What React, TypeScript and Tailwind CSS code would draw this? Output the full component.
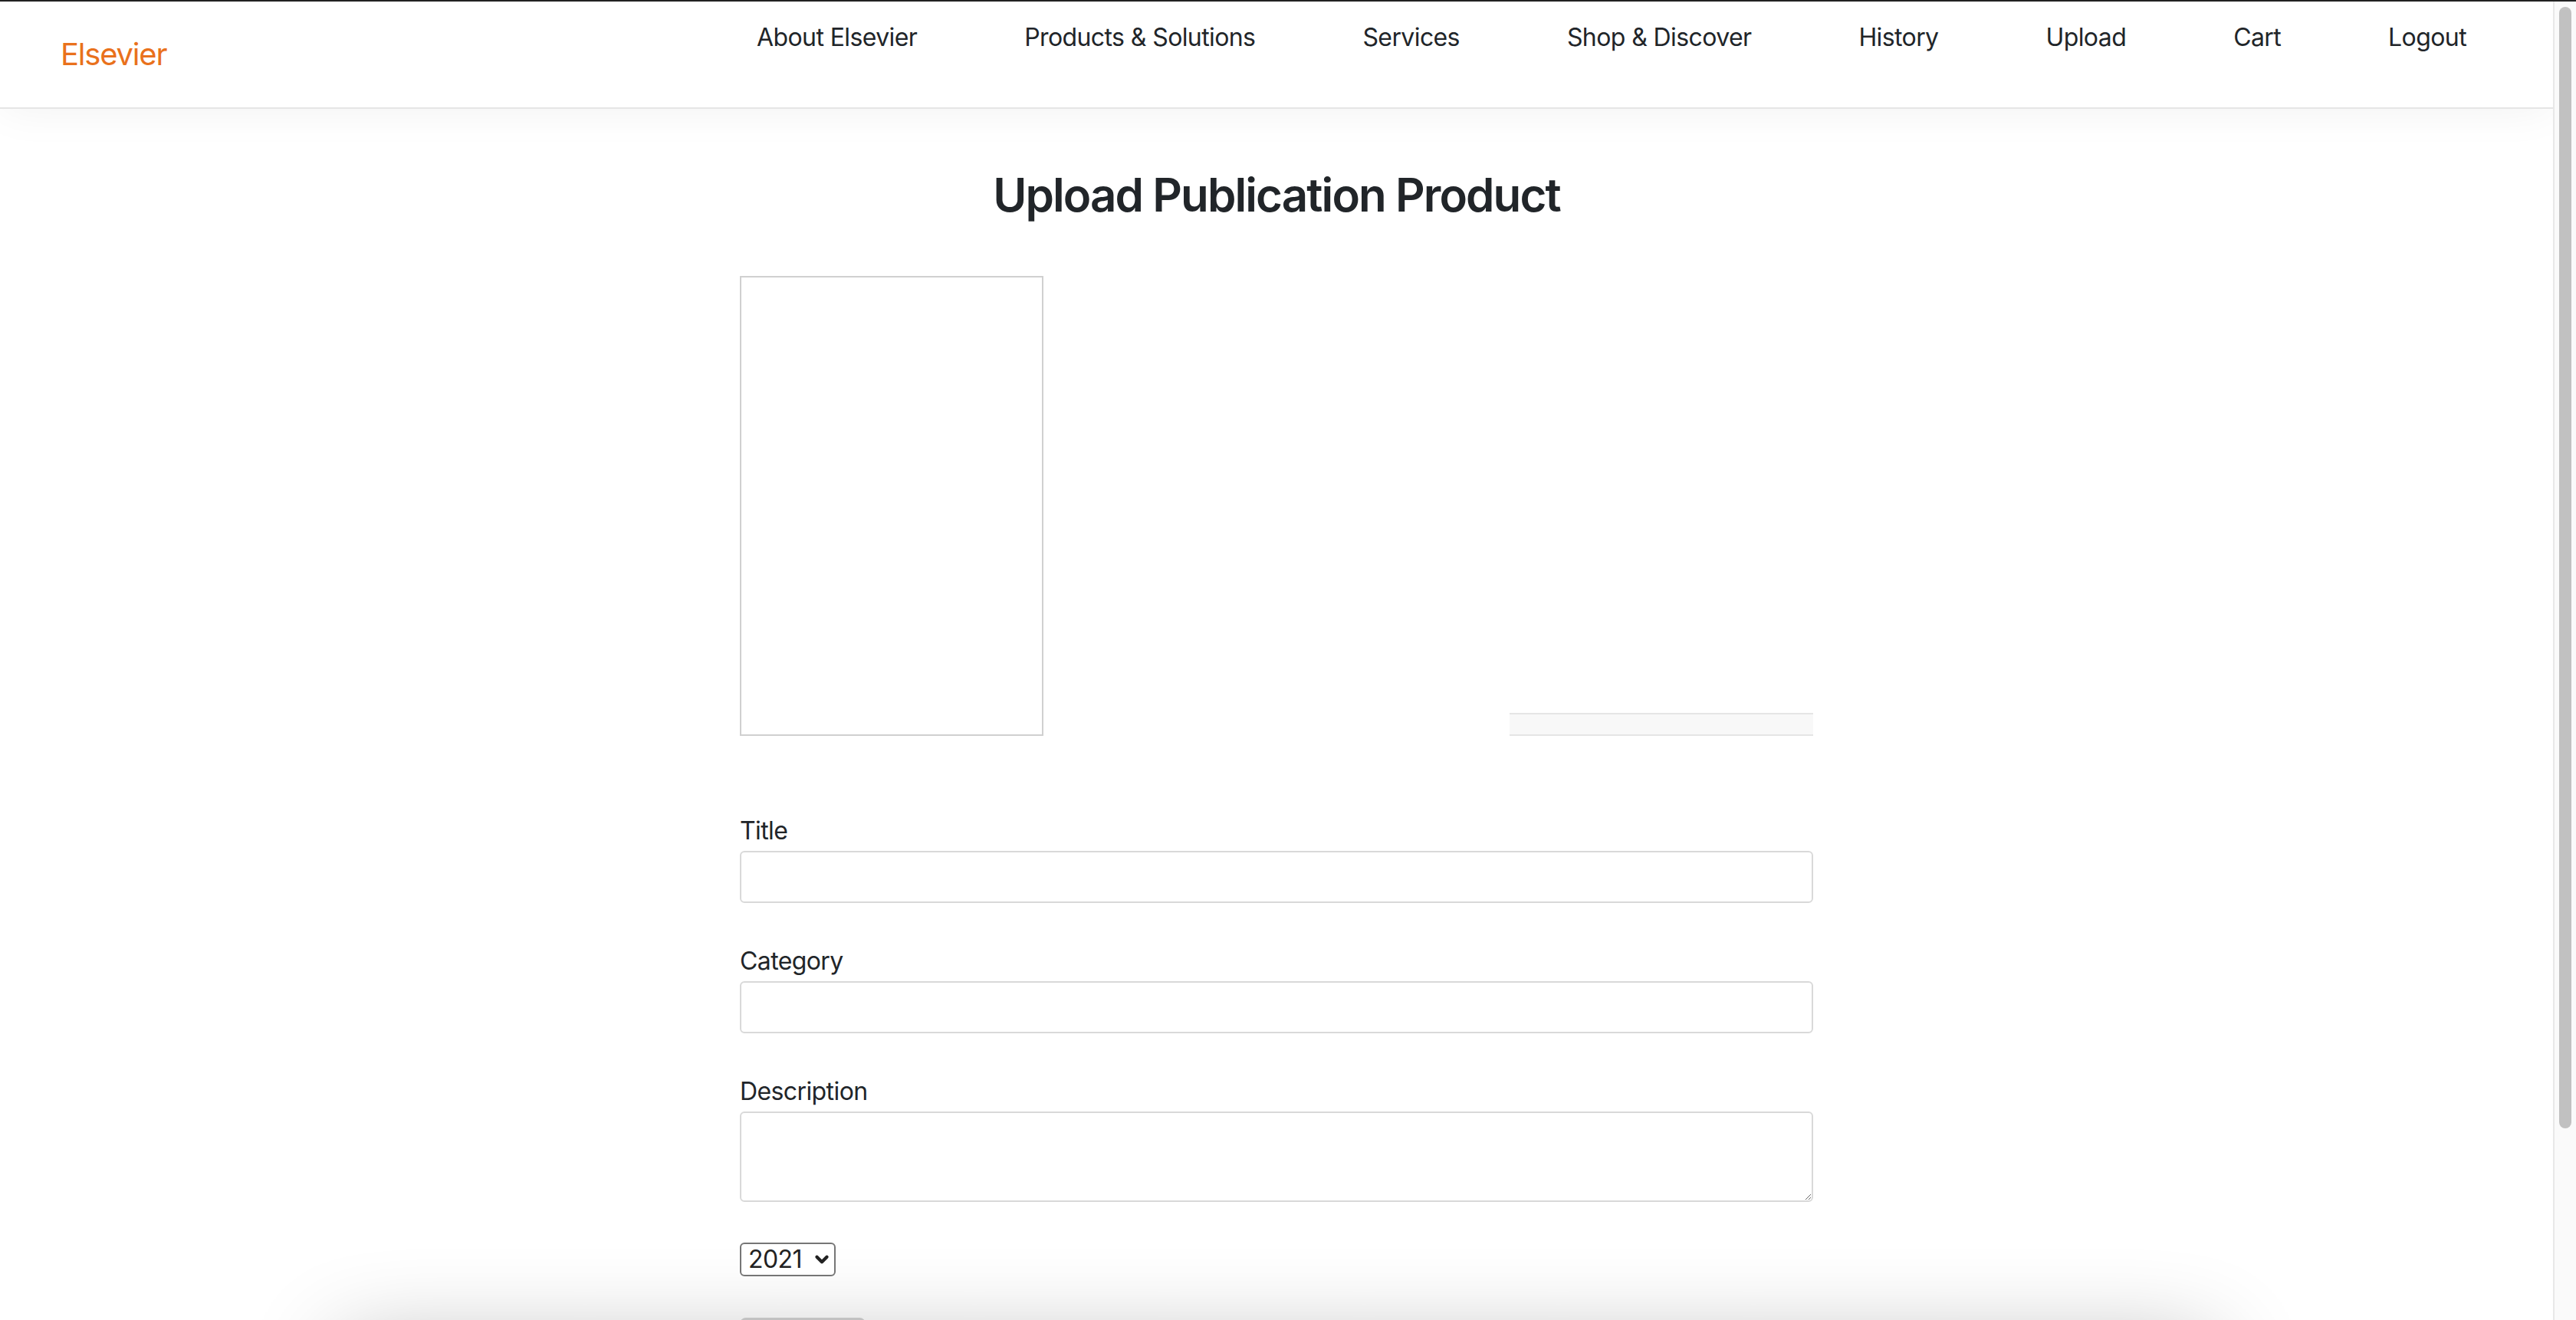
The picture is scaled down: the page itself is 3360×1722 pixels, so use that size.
import { ChevronDown } from 'lucide-react';

const navLinks = ['About Elsevier', 'Products & Solutions', 'Services', 'Shop & Discover', 'History', 'Upload', 'Cart', 'Logout'];

function Field({ label, children, first }: { label: string; children: React.ReactNode; first?: boolean }) {
  return (
    <div className={first ? 'mt-[100px]' : 'mt-[52px]'}>
      <label className="block text-[32px] leading-[48px] tracking-[-0.6px] text-[#212529] mb-[2px]">{label}</label>
      {children}
    </div>
  );
}

export default function App() {
  return (
    <div className="h-screen flex flex-col bg-white font-['Inter','Liberation_Sans',sans-serif]">
      <div className="h-[2px] shrink-0 bg-[#222]"></div>
      <div className="flex-1 min-h-0 flex">
        <div className="flex-1 min-w-0 overflow-hidden bg-white">
          <header className="relative z-10 h-[140px] flex items-start bg-white border-b-2 border-[#e5e5e5] shadow-[0_0_60px_rgba(0,0,0,0.06)]">
            <a className="pl-[79px] pt-[39px] text-[40px] leading-[60px] tracking-[-1.2px] text-[#e9711c]">Elsevier</a>
            <nav className="ml-auto flex pr-[43px] pt-[23px]">
              {navLinks.map((link) => (
                <a key={link} className="px-[70px] text-[32px] leading-[48px] tracking-[-0.6px] text-[#212529]">
                  {link}
                </a>
              ))}
            </nav>
          </header>

          <main className="flex flex-col items-center">
            <h2 className="pt-[76px] text-[60px] leading-[72px] font-semibold tracking-[-1.9px] text-[#212529]">Upload Publication Product</h2>

            <form className="w-[1400px] mt-[70px]">
              <div className="flex justify-between items-end">
                <div className="w-[396px] h-[600px] border-2 border-[#d0d0d0]"></div>
                <div className="w-[396px] h-[30px] bg-[#f8f8f8] border-y-2 border-[#e5e5e5]"></div>
              </div>

              <Field label="Title" first>
                <input className="block w-full h-[68px] px-[24px] border-2 border-[#d9d9d9] rounded-[6px] text-[32px] outline-none" />
              </Field>
              <Field label="Category">
                <input className="block w-full h-[68px] px-[24px] border-2 border-[#d9d9d9] rounded-[6px] text-[32px] outline-none" />
              </Field>
              <Field label="Description">
                <textarea className="block w-full h-[118px] px-[24px] py-[12px] border-2 border-[#d9d9d9] rounded-[6px] text-[32px] outline-none"></textarea>
              </Field>

              <div className="relative w-[125px] mt-[53px]">
                <select className="appearance-none block w-full h-[44px] pl-[9px] border-2 border-[#767676] rounded-[6px] bg-white text-[32px] leading-none tracking-[-0.6px] text-[#222]">
                  <option>2021</option>
                  <option>2020</option>
                  <option>2019</option>
                </select>
                <ChevronDown className="absolute left-[94px] top-[9px] w-[26px] h-[26px] text-[#222] pointer-events-none" strokeWidth={4} />
              </div>

              <button type="button" aria-label="Upload" className="block mt-[54px] w-[164px] h-[76px] rounded-[8px] bg-[#d3d3d3]"></button>
            </form>

            <footer className="w-[2340px] h-[180px] mt-[30px] bg-white shadow-[0_-20px_120px_50px_rgba(0,0,0,0.3)]"></footer>
          </main>
        </div>

        <aside className="w-[30px] shrink-0 bg-[#fafafa] border-l-2 border-[#e8e8e8]">
          <div className="ml-[6px] mt-[7px] w-[16px] h-[1463px] rounded-full bg-[#c1c1c1]"></div>
        </aside>
      </div>
    </div>
  );
}
